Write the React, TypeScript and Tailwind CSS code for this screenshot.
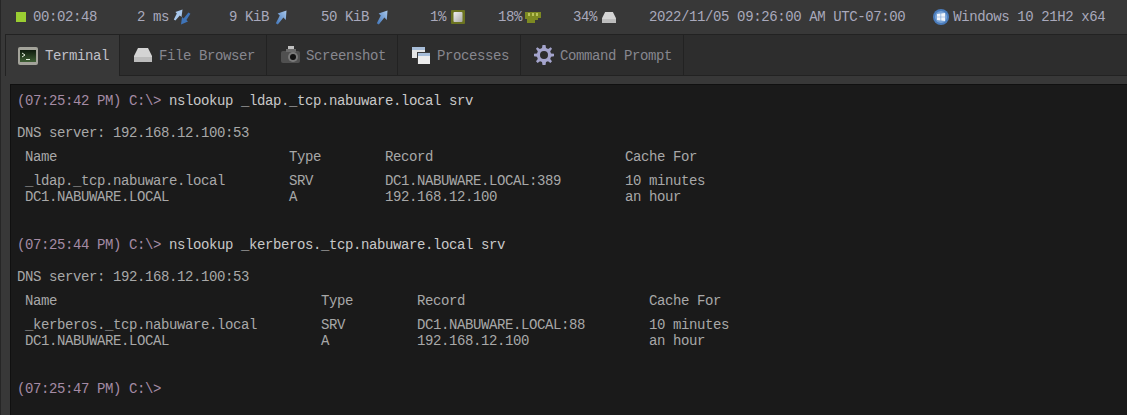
const mono = "font-['Liberation_Mono','DejaVu_Sans_Mono',monospace]";

function Arrow({ flip = false, className = "" }: { flip?: boolean; className?: string }) {
  return (
    <svg width="12" height="15" viewBox="0 0 12 15" className={className}>
      <defs>
        <linearGradient id={flip ? "ad" : "au"} x1="0" y1="1" x2="1" y2="0">
          <stop offset="0" stopColor="#3f74b8" />
          <stop offset="1" stopColor="#a9c8ec" />
        </linearGradient>
      </defs>
      <path d="M11.5 0.5 L10.8 10 L8.4 7.6 L2.8 14.5 L0.8 13.2 L4.8 5.6 L2.6 3.6 Z" fill={`url(#${flip ? "ad" : "au"})`} />
    </svg>
  );
}

function PingIcon() {
  return (
    <svg width="18" height="16" viewBox="0 0 18 16">
      <path d="M9.5 0.5 L8.5 8 L6.8 6.4 L2.4 11.5 L0.8 10.4 L3.8 4.6 L2.4 3 Z" fill="#a9c8ec" />
      <path d="M8 15.5 L9 8 L10.6 9.6 L15.4 3.6 L17.4 4.8 L13.4 11 L15 12.6 Z" fill="#3f74b8" />
    </svg>
  );
}

function CpuIcon() {
  return (
    <svg width="14" height="14" viewBox="0 0 14 14">
      <defs>
        <linearGradient id="cpu" x1="0" y1="0" x2="1" y2="1">
          <stop offset="0" stopColor="#f0f0f0" />
          <stop offset="1" stopColor="#a8a8a8" />
        </linearGradient>
      </defs>
      <rect width="14" height="14" rx="1" fill="#6b7320" />
      <rect x="2.5" y="2" width="9" height="10" rx="1" fill="url(#cpu)" />
    </svg>
  );
}

function RamIcon() {
  return (
    <svg width="16" height="12" viewBox="0 0 16 12">
      <path d="M0 1 H16 V7 H13 V9 H10 V12 H2 V8 H0 Z" fill="#7d8a22" />
      <rect x="3" y="2" width="2" height="3" fill="#b9c25a" />
      <rect x="7" y="2" width="2" height="3" fill="#b9c25a" />
      <rect x="11" y="2" width="2" height="3" fill="#b9c25a" />
    </svg>
  );
}

function DriveIcon({ w = 14, h = 11 }: { w?: number; h?: number }) {
  return (
    <svg width={w} height={h} viewBox="0 0 18 14">
      <path d="M4 0 H14 L18 8 V14 H0 V8 Z" fill="#d4d4d4" />
      <path d="M0 9 H18 V14 H0 Z" fill="#bcbcbc" />
    </svg>
  );
}

function WinIcon() {
  return (
    <svg width="16" height="16" viewBox="0 0 16 16">
      <circle cx="8" cy="8" r="8" fill="#4a7cbc" />
      <circle cx="8" cy="8" r="6" fill="#79a3d6" />
      <path d="M4 5 L7.5 4.5 V7.7 H4 Z M8.2 4.4 L12 4 V7.7 H8.2 Z M4 8.3 H7.5 V11.5 L4 11 Z M8.2 8.3 H12 V12 L8.2 11.6 Z" fill="#f2f5fa" />
    </svg>
  );
}

function TerminalIcon() {
  return (
    <svg width="20" height="18" viewBox="0 0 20 18">
      <defs>
        <linearGradient id="scr" x1="0" y1="0" x2="0" y2="1">
          <stop offset="0" stopColor="#0d1a0d" />
          <stop offset="1" stopColor="#3f5f35" />
        </linearGradient>
      </defs>
      <rect width="20" height="18" rx="2" fill="#a3a39a" />
      <rect x="2" y="3" width="16" height="12" fill="url(#scr)" />
      <path d="M4 6 L7 8 L4 10" stroke="#e6f0e0" fill="none" />
      <rect x="8" y="12" width="4" height="1" fill="#e6f0e0" />
    </svg>
  );
}

function CameraIcon() {
  return (
    <svg width="20" height="18" viewBox="0 0 20 18">
      <rect x="7" y="0" width="6" height="3" fill="#c0c0c0" />
      <rect x="0" y="5" width="19" height="12" rx="2" fill="#505050" />
      <rect x="5" y="3" width="10" height="3" fill="#6a6a6a" />
      <circle cx="12" cy="11" r="5" fill="#7a7a7a" />
      <circle cx="12" cy="11" r="3" fill="#111" />
    </svg>
  );
}

function WindowsIcon() {
  return (
    <svg width="18" height="17" viewBox="0 0 18 17">
      <rect x="0" y="0" width="13" height="11" fill="#e4e4e4" />
      <rect x="0" y="0" width="13" height="3" fill="#a7bdd8" />
      <rect x="5" y="5" width="13" height="12" fill="#3a3a3a" />
      <rect x="6" y="6" width="12" height="11" fill="#ececec" />
      <rect x="6" y="6" width="12" height="3" fill="#a7bdd8" />
    </svg>
  );
}

function GearIcon() {
  return (
    <svg width="20" height="20" viewBox="0 0 20 20">
      <path
        fill="#a4a4cc"
        fillRule="evenodd"
        d="M8.5 0 H11.5 L12 3 L14.2 3.9 L16.7 2.2 L18 3.8 L16.2 6.2 L17 8.4 L20 8.8 V11.2 L17 11.7 L16.2 13.9 L18 16.3 L16.4 18 L14 16.2 L12 17 L11.5 20 H8.5 L8 17 L6 16.2 L3.6 18 L2 16.3 L3.8 13.9 L3 11.7 L0 11.2 V8.8 L3 8.4 L3.8 6.2 L2 3.8 L3.3 2.2 L5.8 3.9 L8 3 Z M10 6 A4 4 0 1 0 10 14 A4 4 0 1 0 10 6 Z"
      />
    </svg>
  );
}

const tabs = [
  { label: "Terminal", icon: <TerminalIcon />, box: "w-[115px] pl-[12px] gap-[7px]", active: true },
  { label: "File Browser", icon: <DriveIcon w={18} h={14} />, box: "w-[147px] pl-[14px] gap-[7px]", active: false },
  { label: "Screenshot", icon: <CameraIcon />, box: "w-[131px] pl-[14px] gap-[5px]", active: false },
  { label: "Processes", icon: <WindowsIcon />, box: "w-[123px] pl-[14px] gap-[7px]", active: false },
  { label: "Command Prompt", icon: <GearIcon />, box: "w-[163px] pl-[13px] gap-[6px]", active: false },
];

function StatusBar() {
  return (
    <div className="flex h-[34px] items-center pl-[15px] text-[#a9a9bc]">
      <div className="h-[10px] w-[10px] bg-[#9acd32]" />
      <span className="ml-[7px]">00:02:48</span>
      <span className="ml-[40px]">2 ms</span>
      <span className="ml-[4px]"><PingIcon /></span>
      <span className="ml-[38px]">9 KiB</span>
      <Arrow className="ml-[6px]" />
      <span className="ml-[34px]">50 KiB</span>
      <Arrow flip className="ml-[7px]" />
      <span className="ml-[42px]">1%</span>
      <span className="ml-[5px]"><CpuIcon /></span>
      <span className="ml-[33px]">18%</span>
      <span className="ml-[3px]"><RamIcon /></span>
      <span className="ml-[32px]">34%</span>
      <span className="ml-[5px]"><DriveIcon /></span>
      <span className="ml-[33px]">2022/11/05 09:26:00 AM UTC-07:00</span>
      <span className="ml-[28px]"><WinIcon /></span>
      <span className="ml-[4px]">Windows 10 21H2 x64</span>
    </div>
  );
}

function TabBar() {
  return (
    <div className="ml-[4px] flex h-[42px] border-t border-b border-[#222222]">
      {tabs.map((t) => (
        <div
          key={t.label}
          className={
            t.active
              ? `${t.box} -mb-px flex items-center border-r border-l border-[#222222] bg-[#383838] text-[#c0c0c8]`
              : `${t.box} flex items-center border-r border-[#222222] bg-[#2d2d2d] text-[#87878f]`
          }
        >
          {t.icon}
          <span className="pt-[1px]">{t.label}</span>
        </div>
      ))}
      <div className="flex-1 bg-[#2d2d2d]" />
    </div>
  );
}

function Prompt({ time, cmd }: { time: string; cmd?: string }) {
  return (
    <div className="h-4">
      <span className="text-[#a58ba5]">({time}) C:\&gt;</span>
      {cmd ? <span className="text-[#c8c8c8]"> {cmd}</span> : null}
    </div>
  );
}

function Lookup({
  cols,
  rows,
}: {
  cols: string;
  rows: string[][];
}) {
  const head = ["Name", "Type", "Record", "Cache For"];
  return (
    <div className="pl-[8px]">
      <div className={`grid h-4 ${cols} text-[#a8a8a8]`}>
        {head.map((h) => (
          <span key={h}>{h}</span>
        ))}
      </div>
      <div className="mt-[8px]">
        {rows.map((r) => (
          <div key={r[0]} className={`grid h-4 ${cols}`}>
            {r.map((c) => (
              <span key={c}>{c}</span>
            ))}
          </div>
        ))}
      </div>
    </div>
  );
}

export default function App() {
  return (
    <div className={`h-[415px] w-[1127px] overflow-hidden border-l border-[#262626] bg-[#383838] whitespace-pre text-[14px] leading-4 tracking-[-0.4px] ${mono}`}>
      <StatusBar />
      <TabBar />
      <div className="mt-[8px] ml-[9px] h-[331px] border-t border-l border-[#101010] bg-[#1a1a1a] pt-[8px] pl-[6px] text-[#a8a8a8]">
        <Prompt time="07:25:42 PM" cmd="nslookup _ldap._tcp.nabuware.local srv" />
        <div className="mt-[16px]">DNS server: 192.168.12.100:53</div>
        <div className="mt-[8px]">
          <Lookup
            cols="grid-cols-[264px_96px_240px_1fr]"
            rows={[
              ["_ldap._tcp.nabuware.local", "SRV", "DC1.NABUWARE.LOCAL:389", "10 minutes"],
              ["DC1.NABUWARE.LOCAL", "A", "192.168.12.100", "an hour"],
            ]}
          />
        </div>
        <div className="mt-[32px]">
          <Prompt time="07:25:44 PM" cmd="nslookup _kerberos._tcp.nabuware.local srv" />
        </div>
        <div className="mt-[16px]">DNS server: 192.168.12.100:53</div>
        <div className="mt-[8px]">
          <Lookup
            cols="grid-cols-[296px_96px_232px_1fr]"
            rows={[
              ["_kerberos._tcp.nabuware.local", "SRV", "DC1.NABUWARE.LOCAL:88", "10 minutes"],
              ["DC1.NABUWARE.LOCAL", "A", "192.168.12.100", "an hour"],
            ]}
          />
        </div>
        <div className="mt-[32px]">
          <Prompt time="07:25:47 PM" />
        </div>
      </div>
    </div>
  );
}
